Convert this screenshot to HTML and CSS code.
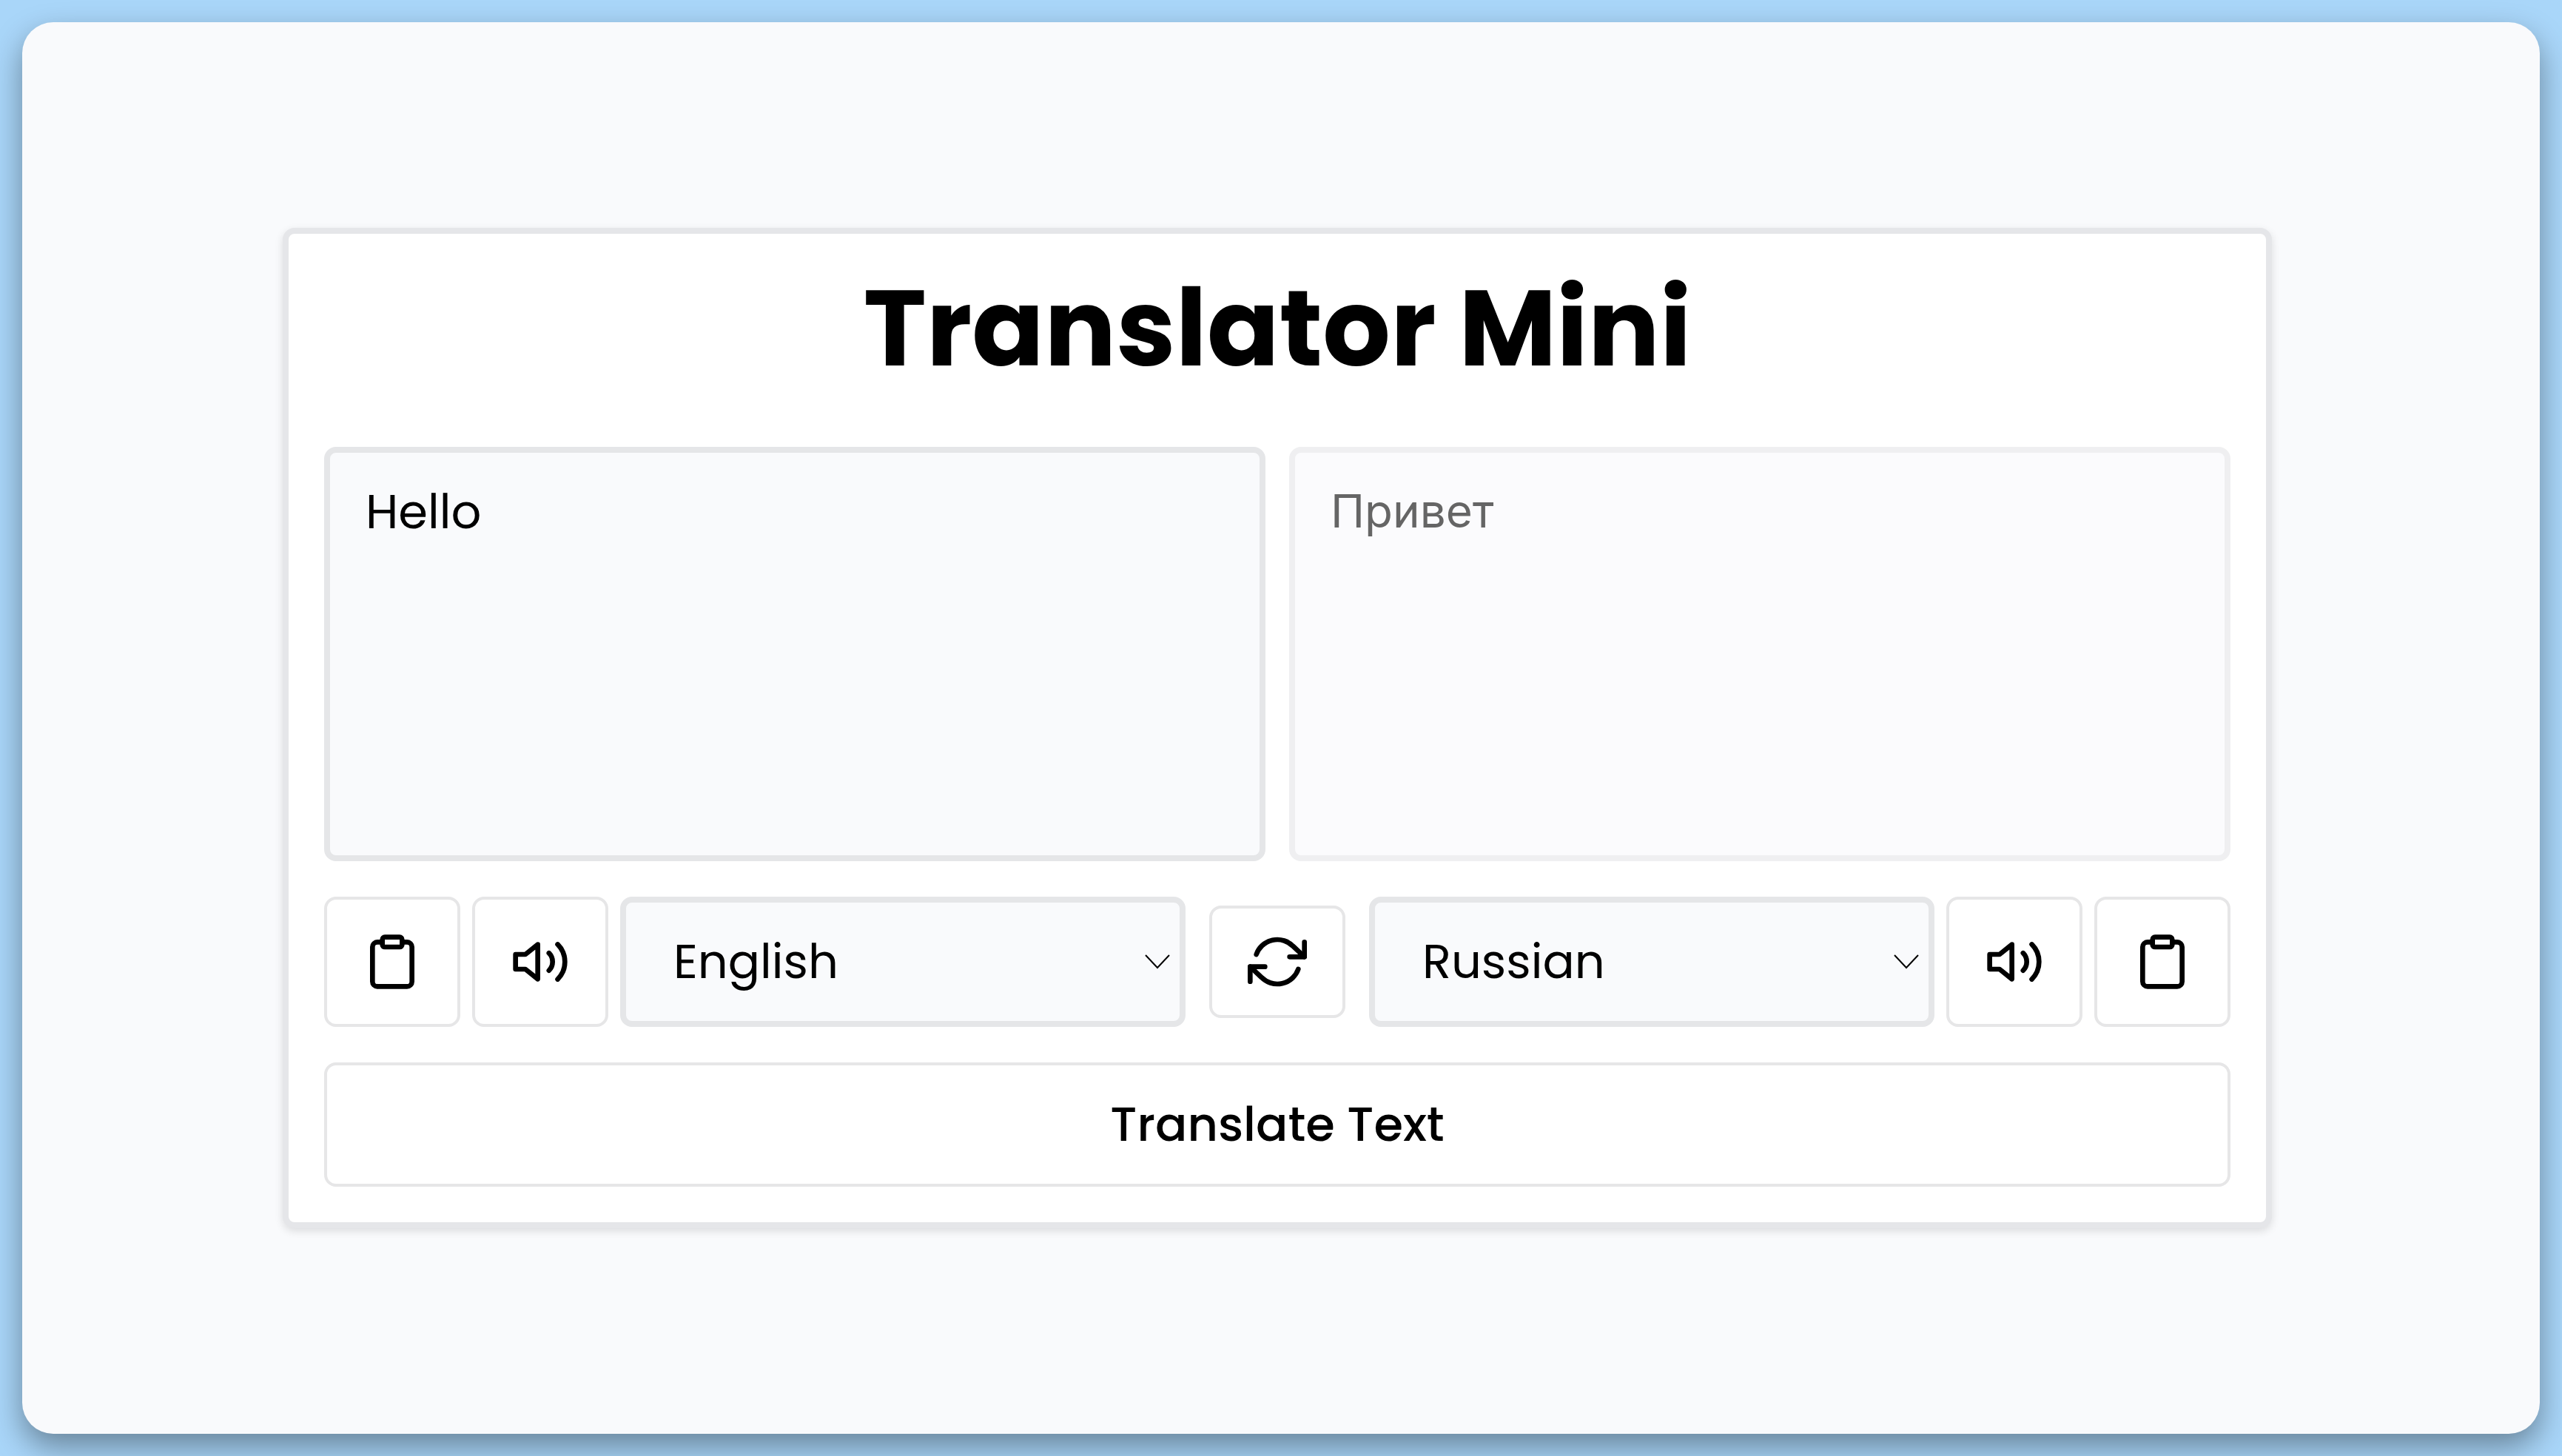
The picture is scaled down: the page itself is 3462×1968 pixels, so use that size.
FILE: index.html
```html
<!DOCTYPE html>
<html lang="en">
<head>
  <meta charset="utf-8">
  <meta name="viewport" content="width=device-width, initial-scale=1">
  <title>Translator Mini</title>
  <link rel="stylesheet" href="styles.css">
</head>
<body>
  <main class="window">
    <form class="card">
      <h1 class="title">Translator Mini</h1>

      <div class="texts">
        <textarea class="field text" aria-label="Text to translate">Hello</textarea>
        <textarea class="field text text-result" aria-label="Translation" disabled>Привет</textarea>
      </div>

      <div class="controls">
        <div class="side">
          <button class="button icon-button" type="button" aria-label="Copy source text">
            <svg class="icon" viewBox="0 0 24 24"><path d="M16 4h2a2 2 0 0 1 2 2v14a2 2 0 0 1-2 2H6a2 2 0 0 1-2-2V6a2 2 0 0 1 2-2h2"/><rect x="8" y="2" width="8" height="4" rx="1" ry="1"/></svg>
          </button>
          <button class="button icon-button" type="button" aria-label="Listen to source text">
            <svg class="icon" viewBox="0 0 24 24"><polygon points="11 5 6 9 2 9 2 15 6 15 11 19 11 5"/><path d="M19.07 4.93a10 10 0 0 1 0 14.14M15.54 8.46a5 5 0 0 1 0 7.07"/></svg>
          </button>
          <div class="picker">
            <select class="field select" aria-label="Source language">
              <option selected>English</option>
              <option>Russian</option>
            </select>
            <svg class="chevron" viewBox="0 0 34 20"><path d="M1 1l16 17L33 1"/></svg>
          </div>
        </div>

        <button class="button icon-button swap" type="button" aria-label="Swap languages">
          <svg class="icon" viewBox="0 0 24 24"><polyline points="23 4 23 10 17 10"/><polyline points="1 20 1 14 7 14"/><path d="M3.51 9a9 9 0 0 1 14.85-3.36L23 10M1 14l4.64 4.36A9 9 0 0 0 20.49 15"/></svg>
        </button>

        <div class="side">
          <div class="picker">
            <select class="field select" aria-label="Target language">
              <option>English</option>
              <option selected>Russian</option>
            </select>
            <svg class="chevron" viewBox="0 0 34 20"><path d="M1 1l16 17L33 1"/></svg>
          </div>
          <button class="button icon-button" type="button" aria-label="Listen to translation">
            <svg class="icon" viewBox="0 0 24 24"><polygon points="11 5 6 9 2 9 2 15 6 15 11 19 11 5"/><path d="M19.07 4.93a10 10 0 0 1 0 14.14M15.54 8.46a5 5 0 0 1 0 7.07"/></svg>
          </button>
          <button class="button icon-button" type="button" aria-label="Copy translation">
            <svg class="icon" viewBox="0 0 24 24"><path d="M16 4h2a2 2 0 0 1 2 2v14a2 2 0 0 1-2 2H6a2 2 0 0 1-2-2V6a2 2 0 0 1 2-2h2"/><rect x="8" y="2" width="8" height="4" rx="1" ry="1"/></svg>
          </button>
        </div>
      </div>

      <button class="button submit" type="button">Translate Text</button>
    </form>
  </main>
</body>
</html>
```
FILE: styles.css
```css
*,
*::before,
*::after {
  box-sizing: border-box;
}

body {
  display: flex;
  min-height: 100vh;
  margin: 0;
  padding: 30px;
  background: #a9d6f9;
  color: #000;
  font-family: Poppins, Inter, "Liberation Sans", sans-serif;
  font-size: 64px;
  line-height: 96px;
}

.window {
  display: flex;
  flex: 1;
  align-items: center;
  justify-content: center;
  padding-right: 10px;
  border-radius: 42px;
  background: #f9fafc;
  box-shadow: 0 18px 42px rgba(0, 0, 0, 0.38);
}

.card {
  display: flex;
  flex-direction: column;
  gap: 48px;
  width: 100%;
  max-width: 2688px;
  padding: 48px;
  border: 8px solid #e5e6e9;
  border-radius: 16px;
  background: #fff;
  box-shadow: 0 4px 12px rgba(0, 0, 0, 0.12);
}

.title {
  margin: 0 0 32px;
  font-size: 144px;
  font-weight: 700;
  line-height: 160px;
  text-align: center;
}

.texts {
  display: grid;
  grid-template-columns: 1fr 1fr;
  gap: 32px;
}

.field {
  width: 100%;
  border: 8px solid #e5e6e8;
  border-radius: 16px;
  background: #f9fafc;
  color: #000;
  font: inherit;
}

.text {
  display: block;
  height: 560px;
  padding: 32px 48px;
  resize: none;
}

.text-result {
  font-size: 62px;
  opacity: 0.6;
}

.controls {
  display: flex;
  align-items: center;
  gap: 32px;
}

.side {
  display: flex;
  flex: 1;
  gap: 16px;
}

.picker {
  position: relative;
  flex: 1;
}

.select {
  display: block;
  height: 176px;
  padding: 0 96px 0 64px;
  appearance: none;
}

.chevron {
  position: absolute;
  top: 50%;
  right: 21px;
  width: 34px;
  height: 20px;
  margin-top: -10px;
  fill: none;
  stroke: #000;
  stroke-width: 2;
  pointer-events: none;
}

.button {
  display: flex;
  align-items: center;
  justify-content: center;
  border: 4px solid #e6e6e7;
  border-radius: 16px;
  background: #fff;
  color: #000;
  font: inherit;
  font-weight: 500;
}

.icon-button {
  width: 184px;
  padding: 0;
}

.swap {
  height: 152px;
}

.icon {
  width: 80px;
  height: 80px;
  fill: none;
  stroke: currentColor;
  stroke-width: 2;
  stroke-linecap: round;
  stroke-linejoin: round;
}

.submit {
  padding: 32px;
}
```
